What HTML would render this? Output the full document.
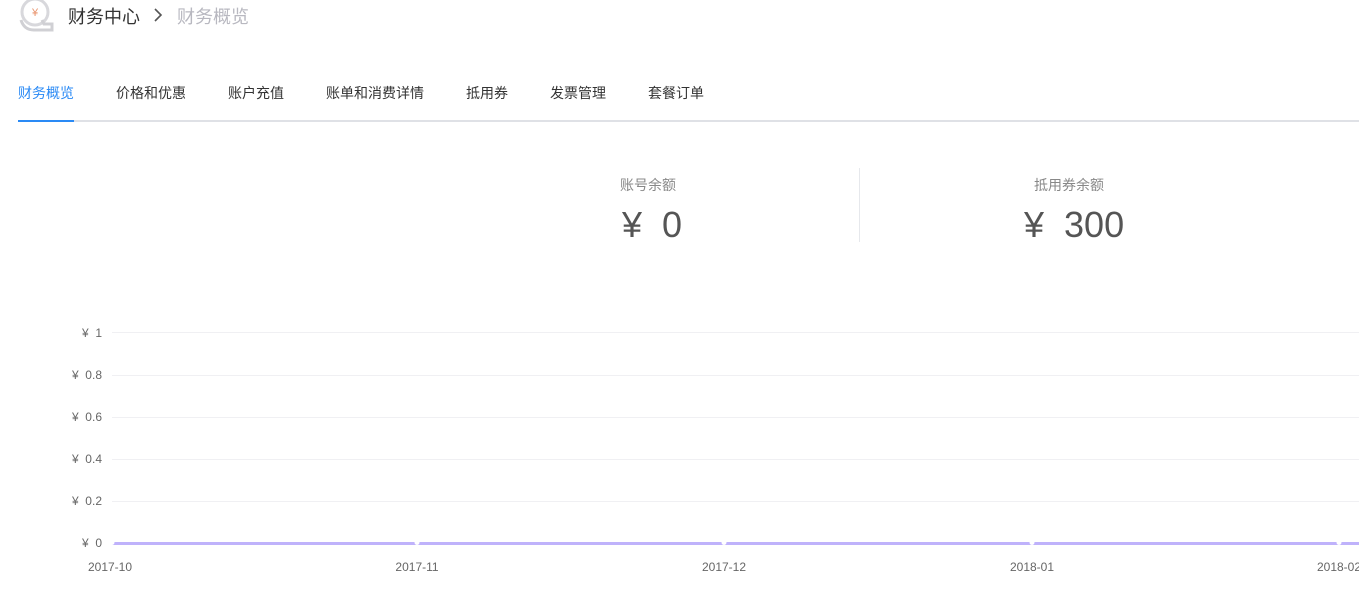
<!DOCTYPE html>
<html><head><meta charset="utf-8"><style>
body{margin:0;width:1359px;height:596px;overflow:hidden;background:#fff;font-family:"Liberation Sans","Noto Sans CJK SC",sans-serif;position:relative}
.a{position:absolute;white-space:nowrap}
.tab{position:absolute;top:83px;font-size:14px;color:#333}
.yl{position:absolute;right:1257px;font-size:12px;color:#666;transform:translateY(-50%);white-space:pre}
.gl{position:absolute;left:112px;right:0;height:1px;background:#f0f0f3}
.xl{position:absolute;top:560px;font-size:12px;color:#666;transform:translateX(-50%);white-space:nowrap}
.dot{position:absolute;top:540px;width:5px;height:5px;border-radius:50%;background:#fff;transform:translateX(-50%)}
</style></head><body>
<svg class="a" style="left:18px;top:0" width="36" height="34" viewBox="0 0 36 34">
<circle cx="17" cy="12" r="13" fill="none" stroke="#d8d8dc" stroke-width="3"/>
<path d="M3 20 Q6 30 16 30 L34 30 L34 24 L26 24 L24 20" fill="none" stroke="#d0d0d4" stroke-width="3"/>
<text x="17" y="16" font-size="11" fill="#e8916a" text-anchor="middle" font-family="Liberation Sans">¥</text>
</svg>
<div class="a" style="left:68px;top:3px;font-size:18px;color:#333">财务中心</div>
<svg class="a" style="left:153px;top:8px" width="10" height="14" viewBox="0 0 10 14"><path d="M2 1 L8 7 L2 13" fill="none" stroke="#555" stroke-width="1.6"/></svg>
<div class="a" style="left:177px;top:3px;font-size:18px;color:#b8b8c0">财务概览</div>
<div class="tab" style="left:18px;color:#2a8af5">财务概览</div>
<div class="tab" style="left:116px">价格和优惠</div>
<div class="tab" style="left:228px">账户充值</div>
<div class="tab" style="left:326px">账单和消费详情</div>
<div class="tab" style="left:466px">抵用券</div>
<div class="tab" style="left:550px">发票管理</div>
<div class="tab" style="left:648px">套餐订单</div>
<div class="a" style="left:18px;right:0;top:120px;height:2px;background:#dfe1e6"></div>
<div class="a" style="left:18px;width:56px;top:120px;height:2px;background:#2a8af5"></div>
<div class="a" style="left:620px;top:175px;font-size:14px;color:#888">账号余额</div>
<div class="a" style="left:622px;top:204px;font-size:36px;color:#555;white-space:pre">¥  0</div>
<div class="a" style="left:859px;top:168px;width:1px;height:74px;background:#e6e8ec"></div>
<div class="a" style="left:1034px;top:175px;font-size:14px;color:#888">抵用券余额</div>
<div class="a" style="left:1024px;top:204px;font-size:36px;color:#555;white-space:pre">¥  300</div>
<div class="gl" style="top:332px"></div><div class="gl" style="top:375px"></div><div class="gl" style="top:417px"></div><div class="gl" style="top:459px"></div><div class="gl" style="top:501px"></div>
<div class="yl" style="top:333px">¥  1</div><div class="yl" style="top:375px">¥  0.8</div><div class="yl" style="top:417px">¥  0.6</div><div class="yl" style="top:459px">¥  0.4</div><div class="yl" style="top:501px">¥  0.2</div><div class="yl" style="top:543px">¥  0</div>
<div class="a" style="left:112px;right:0;top:542px;height:3px;background:#bfb2fb"></div>
<div class="dot" style="left:112px"></div><div class="dot" style="left:417px"></div><div class="dot" style="left:724px"></div><div class="dot" style="left:1032px"></div><div class="dot" style="left:1339px"></div>
<div class="xl" style="left:110px">2017-10</div><div class="xl" style="left:417px">2017-11</div><div class="xl" style="left:724px">2017-12</div><div class="xl" style="left:1032px">2018-01</div><div class="xl" style="left:1339px">2018-02</div>
</body></html>
